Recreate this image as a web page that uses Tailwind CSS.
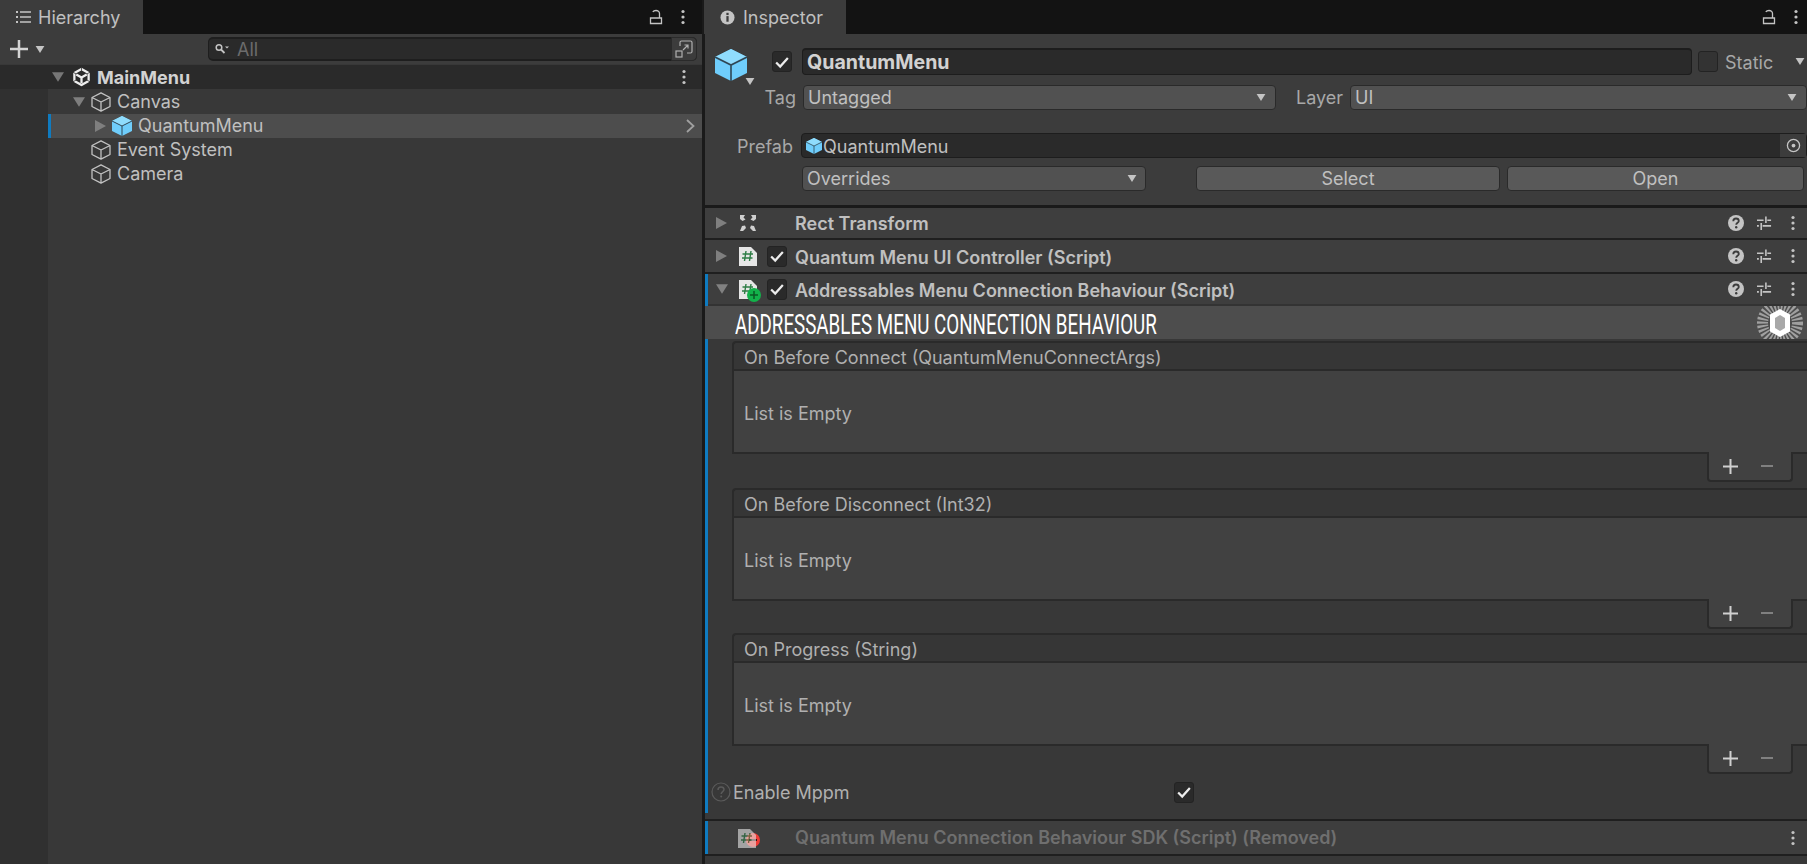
<!DOCTYPE html>
<html lang="en">
<head>
  <meta charset="UTF-8">
  <title>Hierarchy and Inspector</title>
  <script src="https://cdn.jsdelivr.net/npm/@tailwindcss/browser@4"></script>
</head>
<body class="bg-[#1a1a1a]">
  <svg class="hidden">
    <symbol id="cube-line" viewBox="0 0 20 20"><path d="M10 .8 L19 5.500 V14.500 L10 19.200 L1 14.500 V5.500 Z M1 5.500 L10 10 L19 5.500 M10 10 V19.200" fill="none" stroke="#c2c2c2" stroke-width="1.300" stroke-linejoin="round"/></symbol>
    <symbol id="cube-blue" viewBox="0 0 20 20"><path d="M10 0 L20 5 V15 L10 20 L0 15 V5 Z" fill="#6fcdfb"/><path d="M10 0 L20 5 L10 10 L0 5 Z" fill="#8fdcfd"/><path d="M0 5 L10 10 L20 5 M10 10 V20" fill="none" stroke="#2f4654" stroke-width="1"/></symbol>
    <symbol id="lock" viewBox="0 0 14 16"><path d="M1.500 9 H12.500 V14.500 H1.500 Z M10.500 9 V4.500 C10.500 2.500 8.800 1.500 7 1.500 C5.600 1.500 4.400 2 3.800 3" fill="none" stroke="#c4c4c4" stroke-width="1.300"/></symbol>
    <symbol id="kebab" viewBox="0 0 6 16"><circle cx="3" cy="2.500" r="1.600" fill="#c4c4c4"/><circle cx="3" cy="8" r="1.600" fill="#c4c4c4"/><circle cx="3" cy="13.500" r="1.600" fill="#c4c4c4"/></symbol>
    <symbol id="check" viewBox="0 0 20 20"><path d="M3.500 10.500 L8 15 L16.500 5.500" fill="none" stroke="#ececec" stroke-width="2.500"/></symbol>
    <symbol id="down" viewBox="0 0 10 8"><path d="M0 0 H10 L5 8 Z" fill="#c4c4c4"/></symbol>
    <symbol id="help" viewBox="0 0 16 16"><circle cx="8" cy="8" r="8" fill="#c4c4c4"/><path d="M5.300 6.200 C5.300 4.400 6.600 3.500 8 3.500 C9.600 3.500 10.800 4.500 10.800 6 C10.800 7.800 8.200 7.900 8.200 9.800" fill="none" stroke="#3c3c3c" stroke-width="1.800"/><circle cx="8.200" cy="12.200" r="1.200" fill="#3c3c3c"/></symbol>
    <symbol id="sliders" viewBox="0 0 16 16"><path d="M0 4.500 H7 M11 4.500 H15 M0 10.500 H2 M6 10.500 H15 M9.500 .5 V7.500 M4.500 7.500 V15" fill="none" stroke="#c4c4c4" stroke-width="1.700"/></symbol>
    <symbol id="script" viewBox="0 0 18 20"><path d="M0 1 H12 L18 7 V20 H0 Z" fill="#e6e6e6"/><path d="M7 5 L5.500 15 M12 5 L10.500 15 M3.500 8 H14 M3 12 H13.500" fill="none" stroke="#2e7d46" stroke-width="1.400"/></symbol>
  </svg>

  <div class="flex h-[864px] w-[1807px] overflow-hidden font-['Inter',sans-serif] text-[18px] text-[#c0c0c0]">

    <!-- Hierarchy -->
    <section class="flex w-[702px] shrink-0 flex-col bg-[#383838]">
      <div class="flex h-[34px] items-center bg-[#131313] pr-[16px]">
        <div class="flex h-full w-[143px] items-center gap-[7px] bg-[#3c3c3c] pl-[15px]">
          <svg class="h-[14px] w-[16px]" viewBox="0 0 16 14"><path d="M5 2 H16 M5 7 H16 M5 12 H16" stroke="#c4c4c4" stroke-width="1.300"/><path d="M1 2 H3 M1 7 H3 M1 12 H3" stroke="#c4c4c4" stroke-width="2"/></svg>
          <span>Hierarchy</span>
        </div>
        <svg class="ml-auto h-[16px] w-[14px]"><use href="#lock"/></svg>
        <svg class="ml-[17px] h-[16px] w-[6px]"><use href="#kebab"/></svg>
      </div>

      <div class="flex h-[30px] items-center bg-[#3c3c3c] pl-[10px] pr-[5px]">
        <svg class="h-[18px] w-[18px]" viewBox="0 0 18 18"><path d="M9 0 V18 M0 9 H18" stroke="#d4d4d4" stroke-width="2.500"/></svg>
        <svg class="ml-[7px] h-[7px] w-[10px]"><use href="#down"/></svg>
        <div class="ml-[163px] flex h-[24px] flex-1 items-center rounded-[5px] border-t-2 border-b-2 border-l border-[#1e1e1e] bg-[#2a2a2a] pl-[6px]">
          <svg class="h-[12px] w-[14px]" viewBox="0 0 14 12"><circle cx="4" cy="4.500" r="2.800" fill="none" stroke="#c4c4c4" stroke-width="1.500"/><path d="M6 6.500 L9.500 10" stroke="#c4c4c4" stroke-width="1.800"/><path d="M10 3.500 H14 L12 5.500 Z" fill="#c4c4c4"/></svg>
          <span class="ml-[8px] text-[#6c6c6c]">All</span>
          <div class="ml-auto -my-[2px] flex h-[24px] w-[26px] items-center justify-center rounded-r-[5px] border border-[#2a2a2a] bg-[#3c3c3c]">
            <svg class="h-[18px] w-[18px]" viewBox="0 0 18 18"><path d="M5 6 V2.500 Q5 1 6.500 1 H15.500 Q17 1 17 2.500 V11.500 Q17 13 15.500 13 H12 M8 10 L13 5 M9.500 5 H13 V8.500" fill="none" stroke="#b0b0b0" stroke-width="1.200"/><rect x="1" y="11" width="6" height="6" fill="none" stroke="#b0b0b0" stroke-width="1.200"/></svg>
          </div>
        </div>
      </div>

      <div class="mt-px flex h-[24px] items-center bg-[#2a2a2a] pl-[52px] pr-[15px] font-bold text-[#d2d2d2]">
        <svg class="h-[10px] w-[12px] opacity-50"><use href="#down"/></svg>
        <svg class="ml-[8px] h-[20px] w-[19px]" viewBox="0 0 20 20"><path d="M10 1.500 L17.500 5.800 V14.200 L10 18.500 L2.500 14.200 V5.800 Z" fill="none" stroke="#eeeeee" stroke-width="2.400" stroke-linejoin="round"/><path d="M10 10.500 L4.500 7.300 M10 10.500 L15.500 7.300 M10 10.500 V16.500" fill="none" stroke="#eeeeee" stroke-width="2.400"/><path d="M10 0 V3.500 M1 5 L4 6.500 M19 5 L16 6.500 M1 15 L4 13.500 M19 15 L16 13.500" stroke="#2a2a2a" stroke-width=".8"/></svg>
        <span class="ml-[6px]">MainMenu</span>
        <svg class="ml-auto h-[16px] w-[6px]"><use href="#kebab"/></svg>
      </div>

      <div class="flex flex-1">
        <div class="w-[48px] bg-[#303030]"></div>
        <div class="flex-1">
          <div class="flex h-[25px] items-center pl-[25px]">
            <svg class="h-[10px] w-[12px] opacity-50"><use href="#down"/></svg>
            <svg class="ml-[6px] h-[20px] w-[20px]"><use href="#cube-line"/></svg>
            <span class="ml-[6px]">Canvas</span>
          </div>
          <div class="flex h-[24px] items-center border-l-[3px] border-[#0f7bc0] bg-[#4d4d4d] pl-[44px] pr-[7px]">
            <svg class="h-[12px] w-[11px]" viewBox="0 0 11 12"><path d="M0 0 L11 6 L0 12 Z" fill="#7f7f7f"/></svg>
            <svg class="ml-[6px] h-[20px] w-[20px]"><use href="#cube-blue"/></svg>
            <span class="ml-[6px] pb-[2px]">QuantumMenu</span>
            <svg class="ml-auto h-[14px] w-[9px]" viewBox="0 0 9 14"><path d="M1 1 L7.500 7 L1 13" fill="none" stroke="#a0a0a0" stroke-width="1.800"/></svg>
          </div>
          <div class="flex h-[24px] items-center pl-[43px]">
            <svg class="h-[20px] w-[20px]"><use href="#cube-line"/></svg>
            <span class="ml-[6px] pb-[2px]">Event System</span>
          </div>
          <div class="flex h-[24px] items-center pl-[43px]">
            <svg class="h-[20px] w-[20px]"><use href="#cube-line"/></svg>
            <span class="ml-[6px] pb-[2px]">Camera</span>
          </div>
        </div>
      </div>
    </section>

    <!-- Inspector -->
    <section class="ml-[3px] flex flex-1 flex-col bg-[#383838]">
      <div class="-ml-px flex h-[34px] items-center bg-[#131313] pr-[8px]">
        <div class="flex h-full w-[142px] items-center gap-[8px] bg-[#3c3c3c] pl-[16px]">
          <svg class="h-[15px] w-[15px]" viewBox="0 0 16 16"><circle cx="8" cy="8" r="7.500" fill="#c4c4c4"/><rect x="6.800" y="6.500" width="2.400" height="6" fill="#3c3c3c"/><rect x="6.800" y="3" width="2.400" height="2.400" fill="#3c3c3c"/></svg>
          <span>Inspector</span>
        </div>
        <svg class="ml-auto h-[16px] w-[14px]"><use href="#lock"/></svg>
        <svg class="ml-[17px] h-[16px] w-[6px]"><use href="#kebab"/></svg>
      </div>

      <!-- Object header -->
      <div class="flex h-[171px] flex-col bg-[#3c3c3c]">
        <div class="mt-[14px] flex h-[27px] items-center">
          <div class="relative ml-[10px] h-[32px] w-[32px] translate-y-[3px]">
            <svg class="h-[32px] w-[32px]"><use href="#cube-blue"/></svg>
            <svg class="absolute left-[30px] top-[29px] h-[7px] w-[10px]"><use href="#down"/></svg>
          </div>
          <div class="ml-[25px] flex h-[21px] w-[20px] items-center justify-center rounded-[3px] border border-[#232323] bg-[#2a2a2a]">
            <svg class="h-[18px] w-[18px]"><use href="#check"/></svg>
          </div>
          <div class="ml-[10px] flex h-[27px] w-[890px] items-center rounded-[4px] border border-t-2 border-[#1d1d1d] bg-[#2a2a2a] pl-[4px] pt-[1px] text-[19.6px] font-bold text-[#d2d2d2]">QuantumMenu</div>
          <div class="ml-[6px] h-[21px] w-[20px] rounded-[3px] border border-[#232323] bg-[#333333]"></div>
          <span class="ml-[7px] pt-[1px] text-[#a8a8a8]">Static</span>
          <svg class="ml-auto mr-[2px] h-[7px] w-[10px]"><use href="#down"/></svg>
        </div>

        <div class="mt-[10px] flex h-[25px] items-center">
          <span class="w-[91px] text-right text-[#a8a8a8]">Tag</span>
          <div class="ml-[7px] flex h-[25px] w-[473px] items-center rounded-[4px] border border-[#2a2a2a] bg-[#515151] pl-[4px] pr-[9px]">
            <span>Untagged</span>
            <svg class="ml-auto h-[7px] w-[10px]"><use href="#down"/></svg>
          </div>
          <span class="ml-[20px] text-[#a8a8a8]">Layer</span>
          <div class="ml-[7px] flex h-[25px] flex-1 items-center rounded-[4px] border border-[#2a2a2a] bg-[#515151] pl-[4px] pr-[9px]">
            <span>UI</span>
            <svg class="ml-auto h-[7px] w-[10px]"><use href="#down"/></svg>
          </div>
        </div>

        <div class="mt-[23px] flex h-[25px] items-center">
          <span class="w-[88px] pt-[1px] text-right text-[#a8a8a8]">Prefab</span>
          <div class="ml-[8px] flex h-[25px] flex-1 items-center rounded-[4px] border border-[#1d1d1d] bg-[#2a2a2a] pl-[4px]">
            <svg class="h-[16px] w-[16px]"><use href="#cube-blue"/></svg>
            <span class="ml-px pt-[1px]">QuantumMenu</span>
            <div class="ml-auto flex h-full w-[26px] items-center justify-center bg-[#3c3c3c]">
              <svg class="h-[15px] w-[15px]" viewBox="0 0 16 16"><circle cx="8" cy="8" r="6.500" fill="none" stroke="#c4c4c4" stroke-width="1.400"/><circle cx="8" cy="8" r="2" fill="#c4c4c4"/></svg>
            </div>
          </div>
        </div>

        <div class="mt-[8px] flex h-[25px] items-center">
          <div class="ml-[97px] flex h-[25px] w-[344px] items-center rounded-[4px] border border-[#2a2a2a] bg-[#515151] pl-[4px] pr-[8px]">
            <span>Overrides</span>
            <svg class="ml-auto h-[7px] w-[10px]"><use href="#down"/></svg>
          </div>
          <div class="ml-[50px] flex h-[25px] w-[304px] items-center justify-center rounded-[4px] border border-[#2a2a2a] bg-[#595959]">Select</div>
          <div class="ml-[7px] flex h-[25px] w-[297px] items-center justify-center rounded-[4px] border border-[#2a2a2a] bg-[#595959]">Open</div>
        </div>
      </div>

      <div class="h-[3px] bg-[#1a1a1a]"></div>

      <!-- Components -->
      <div class="flex h-[30px] items-center bg-[#3e3e3e] pl-[11px] pr-[11px] font-semibold">
        <svg class="h-[12px] w-[11px]" viewBox="0 0 11 12"><path d="M0 0 L11 6 L0 12 Z" fill="#7f7f7f"/></svg>
        <svg class="ml-[12px] h-[18px] w-[18px]" viewBox="0 0 18 18"><path d="M1 1 H6 L4.500 3.500 L6.500 5.500 L3.500 7 L1 5 Z M17 1 H12 L13.500 3.500 L11.500 5.500 L14.500 7 L17 5 Z M1 17 L3 12 L6 11.500 L7 14 L4 17 Z M17 17 L15 12 L12 11.500 L11 14 L14 17 Z" fill="#d0d0d0"/></svg>
        <span class="ml-[38px] pt-[1px]">Rect Transform</span>
        <svg class="ml-auto h-[16px] w-[16px]"><use href="#help"/></svg>
        <svg class="ml-[13px] h-[15px] w-[15px]"><use href="#sliders"/></svg>
        <svg class="ml-[18px] h-[16px] w-[6px]"><use href="#kebab"/></svg>
      </div>
      <div class="h-[2px] bg-[#1f1f1f]"></div>
      <div class="flex h-[32px] items-center bg-[#3e3e3e] pl-[11px] pr-[11px] font-semibold">
        <svg class="h-[12px] w-[11px]" viewBox="0 0 11 12"><path d="M0 0 L11 6 L0 12 Z" fill="#7f7f7f"/></svg>
        <svg class="ml-[12px] h-[20px] w-[18px]"><use href="#script"/></svg>
        <div class="ml-[10px] flex h-[21px] w-[20px] items-center justify-center rounded-[3px] border border-[#232323] bg-[#2a2a2a]"><svg class="h-[18px] w-[18px]"><use href="#check"/></svg></div>
        <span class="ml-[8px] pt-[2px]">Quantum Menu UI Controller (Script)</span>
        <svg class="ml-auto h-[16px] w-[16px]"><use href="#help"/></svg>
        <svg class="ml-[13px] h-[15px] w-[15px]"><use href="#sliders"/></svg>
        <svg class="ml-[18px] h-[16px] w-[6px]"><use href="#kebab"/></svg>
      </div>
      <div class="h-[2px] bg-[#1f1f1f]"></div>

      <div class="flex h-[539px] shrink-0 flex-col border-l-[3px] border-[#0f7bc0]">
        <div class="flex h-[30px] shrink-0 items-center bg-[#3e3e3e] pl-[8px] pr-[11px] font-semibold">
          <svg class="h-[10px] w-[12px] opacity-50"><use href="#down"/></svg>
          <div class="relative ml-[11px] h-[20px] w-[18px]">
            <svg class="h-[20px] w-[18px]"><use href="#script"/></svg>
            <svg class="absolute left-[8px] top-[9px] h-[14px] w-[14px]" viewBox="0 0 14 14"><circle cx="7" cy="7" r="7" fill="#12b24a"/><path d="M7 3 V11 M3 7 H11" stroke="#0a5a25" stroke-width="1.500"/></svg>
          </div>
          <div class="ml-[10px] flex h-[21px] w-[20px] items-center justify-center rounded-[3px] border border-[#232323] bg-[#2a2a2a]"><svg class="h-[18px] w-[18px]"><use href="#check"/></svg></div>
          <span class="ml-[8px] pt-[3px]">Addressables Menu Connection Behaviour (Script)</span>
          <svg class="ml-auto h-[16px] w-[16px]"><use href="#help"/></svg>
          <svg class="ml-[13px] h-[15px] w-[15px]"><use href="#sliders"/></svg>
          <svg class="ml-[18px] h-[16px] w-[6px]"><use href="#kebab"/></svg>
        </div>
        <div class="h-[2px] shrink-0 bg-[#333333]"></div>

        <div class="-ml-[3px] flex h-[33px] shrink-0 items-center overflow-hidden bg-[#4d4d4d] pl-[30px] pr-[4px]">
          <span class="origin-left scale-x-[0.67] pt-[4px] font-['Roboto',sans-serif] text-[28px] leading-none whitespace-nowrap text-white">ADDRESSABLES MENU CONNECTION BEHAVIOUR</span>
          <svg class="ml-auto h-[46px] w-[46px] shrink-0" viewBox="0 0 46 46">
            <circle cx="23" cy="23" r="17.500" fill="none" stroke="#a0a0a0" stroke-width="11" stroke-dasharray="2 1.600"/>
            <path d="M23 9 L33 14.500 V31.500 L23 37 L13 31.500 V14.500 Z" fill="#ffffff"/>
            <path d="M23 15 L28 18 V28 L23 31 L18 28 V18 Z" fill="#a8a8a8"/>
          </svg>
        </div>
        <div class="h-[2px] shrink-0"></div>

        <div class="ml-[24px] flex h-[141px] shrink-0 flex-col text-[#b0b0b0]">
          <div class="flex h-[30px] shrink-0 items-center rounded-tl-[4px] border-t-2 border-b-2 border-l-2 border-[#2a2a2a] bg-[#363636] pl-[10px] pt-[2px]">On Before Connect (QuantumMenuConnectArgs)</div>
          <div class="flex h-[83px] shrink-0 items-center border-b-2 border-l-2 border-[#2a2a2a] bg-[#414141] pl-[10px] pt-[3px]">List is Empty</div>
          <div class="relative z-10 -mt-[2px] ml-auto mr-[14px] flex h-[30px] w-[86px] shrink-0 items-center gap-[23px] rounded-b-[4px] border-r-2 border-b-2 border-l-2 border-[#2a2a2a] bg-[#414141] pl-[14px]">
            <svg class="h-[15px] w-[15px]" viewBox="0 0 15 15"><path d="M7.500 0 V15 M0 7.500 H15" stroke="#d0d0d0" stroke-width="2"/></svg>
            <span class="h-[2px] w-[12px] bg-[#808080]"></span>
          </div>
        </div>
        <div class="h-[6px] shrink-0"></div>
        <div class="ml-[24px] flex h-[141px] shrink-0 flex-col text-[#b0b0b0]">
          <div class="flex h-[30px] shrink-0 items-center rounded-tl-[4px] border-t-2 border-b-2 border-l-2 border-[#2a2a2a] bg-[#363636] pl-[10px] pt-[2px]">On Before Disconnect (Int32)</div>
          <div class="flex h-[83px] shrink-0 items-center border-b-2 border-l-2 border-[#2a2a2a] bg-[#414141] pl-[10px] pt-[3px]">List is Empty</div>
          <div class="relative z-10 -mt-[2px] ml-auto mr-[14px] flex h-[30px] w-[86px] shrink-0 items-center gap-[23px] rounded-b-[4px] border-r-2 border-b-2 border-l-2 border-[#2a2a2a] bg-[#414141] pl-[14px]">
            <svg class="h-[15px] w-[15px]" viewBox="0 0 15 15"><path d="M7.500 0 V15 M0 7.500 H15" stroke="#d0d0d0" stroke-width="2"/></svg>
            <span class="h-[2px] w-[12px] bg-[#808080]"></span>
          </div>
        </div>
        <div class="h-[4px] shrink-0"></div>
        <div class="ml-[24px] flex h-[141px] shrink-0 flex-col text-[#b0b0b0]">
          <div class="flex h-[30px] shrink-0 items-center rounded-tl-[4px] border-t-2 border-b-2 border-l-2 border-[#2a2a2a] bg-[#363636] pl-[10px] pt-[2px]">On Progress (String)</div>
          <div class="flex h-[83px] shrink-0 items-center border-b-2 border-l-2 border-[#2a2a2a] bg-[#414141] pl-[10px] pt-[3px]">List is Empty</div>
          <div class="relative z-10 -mt-[2px] ml-auto mr-[14px] flex h-[30px] w-[86px] shrink-0 items-center gap-[23px] rounded-b-[4px] border-r-2 border-b-2 border-l-2 border-[#2a2a2a] bg-[#414141] pl-[14px]">
            <svg class="h-[15px] w-[15px]" viewBox="0 0 15 15"><path d="M7.500 0 V15 M0 7.500 H15" stroke="#d0d0d0" stroke-width="2"/></svg>
            <span class="h-[2px] w-[12px] bg-[#808080]"></span>
          </div>
        </div>

        <div class="mt-[5px] flex h-[26px] shrink-0 items-center pl-[3px]">
          <svg class="h-[20px] w-[20px]" viewBox="0 0 20 20"><circle cx="10" cy="10" r="9" fill="none" stroke="#5a5a5a" stroke-width="1.200"/><path d="M7 8 C7 6 8.300 5 10 5 C11.800 5 13 6.200 13 7.600 C13 9.600 10.200 9.800 10.200 12" fill="none" stroke="#5a5a5a" stroke-width="1.500"/><circle cx="10.200" cy="14.500" r="1" fill="#5a5a5a"/></svg>
          <span class="ml-[2px] w-[112px] whitespace-nowrap text-[#b0b0b0]">Enable Mppm</span>
          <div class="ml-[329px] flex h-[21px] w-[20px] items-center justify-center rounded-[3px] border border-[#232323] bg-[#2a2a2a]"><svg class="h-[18px] w-[18px]"><use href="#check"/></svg></div>
        </div>
      </div>

      <div class="mt-[6px] h-[2px] shrink-0 bg-[#1f1f1f]"></div>
      <div class="flex h-[33px] shrink-0 items-center border-l-[3px] border-[#0f7bc0] bg-[#3e3e3e] pl-[30px] pr-[11px] font-semibold text-[#6f6f6f]">
        <svg class="h-[20px] w-[18px] shrink-0 opacity-60"><use href="#script"/></svg>
        <svg class="-ml-[10px] mt-[5px] h-[14px] w-[14px] shrink-0" viewBox="0 0 14 14"><circle cx="7" cy="7" r="7" fill="#ee3b36"/><rect x="3" y="6" width="8" height="2" fill="#3a1010"/></svg>
        <span class="ml-[35px] pb-[1px]">Quantum Menu Connection Behaviour SDK (Script) (Removed)</span>
        <svg class="ml-auto h-[16px] w-[6px]"><use href="#kebab"/></svg>
      </div>
      <div class="h-[2px] shrink-0 bg-[#1f1f1f]"></div>
      <div class="flex-1 bg-[#383838]"></div>
    </section>
  </div>
</body>
</html>
